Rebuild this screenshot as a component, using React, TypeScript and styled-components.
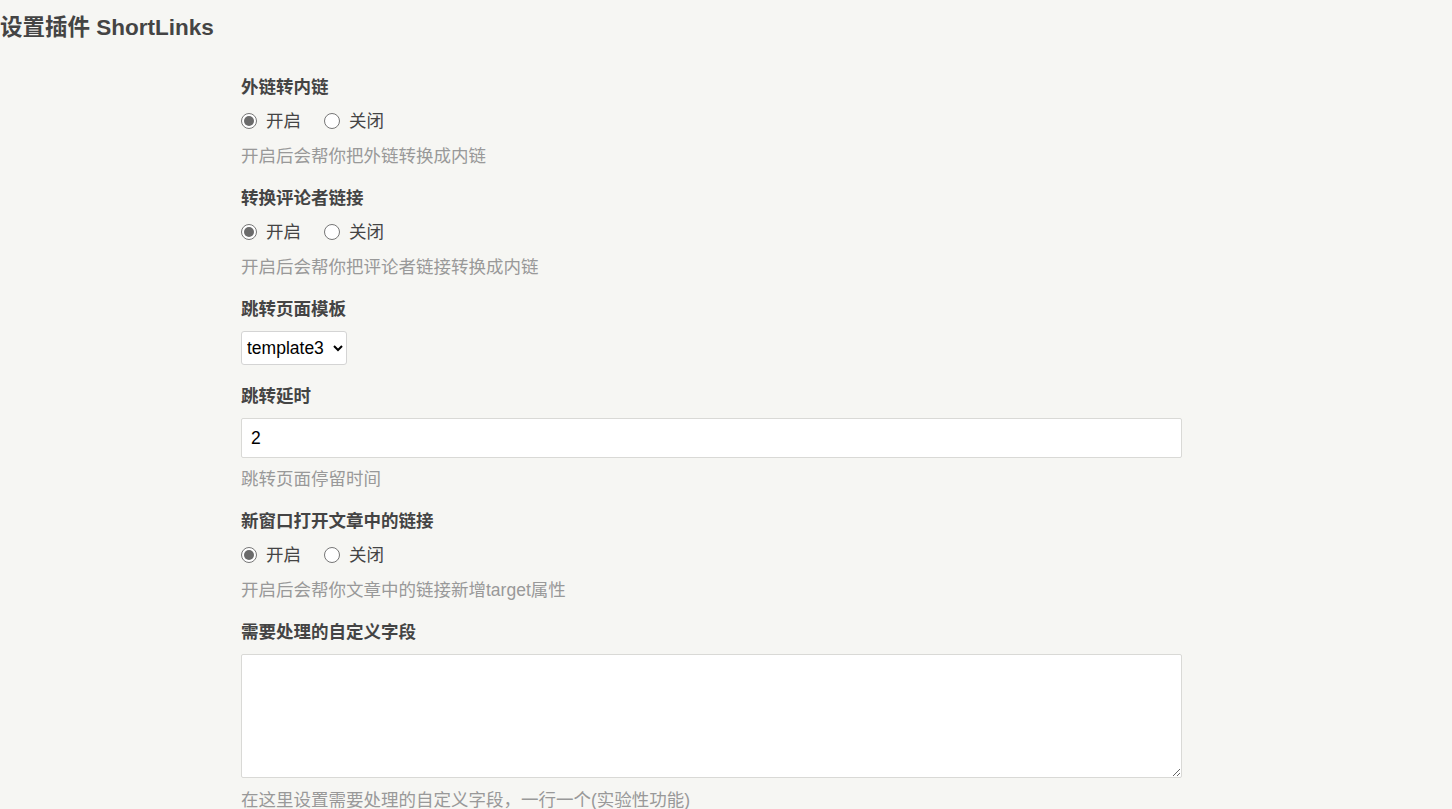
import React from "react";
import styled, { createGlobalStyle } from "styled-components";

const Global = createGlobalStyle`
  html, body { margin: 0; padding: 0; background: #f6f6f3; }
  body {
    font-family: "Liberation Sans", "Noto Sans CJK SC", sans-serif;
    font-size: 17.5px;
    color: #444;
  }
  * { box-sizing: border-box; }
`;

const Page = styled.div`
  display: flex;
  flex-direction: column;
  padding-top: 13px;
`;

const Title = styled.h2`
  margin: 0;
  font-size: 22.5px;
  line-height: 30px;
  font-weight: 700;
  color: #444;
`;

const Form = styled.ul`
  list-style: none;
  margin: 33px 0 0 241px;
  padding: 0;
  width: 941px;
  display: flex;
  flex-direction: column;
  gap: 20px;
`;

const Item = styled.li`
  display: flex;
  flex-direction: column;
  align-items: flex-start;
`;

const Label = styled.label`
  display: block;
  font-weight: 700;
  line-height: 22px;
  margin-bottom: 11px;
  color: #444;
`;

const RadioRow = styled.div`
  display: flex;
  align-items: center;
  height: 24px;
  gap: 23px;
`;

const RadioOption = styled.label`
  display: flex;
  align-items: center;
  gap: 9px;
  color: #444;
  line-height: 22px;
`;

const Radio = styled.input.attrs({ type: "radio" })`
  appearance: none;
  margin: 0;
  width: 16px;
  height: 16px;
  border-radius: 50%;
  border: 1px solid #767676;
  background: #fff;
  display: grid;
  place-content: center;
  &::before {
    content: "";
    width: 10px;
    height: 10px;
    border-radius: 50%;
    background: #6b6b6b;
    transform: scale(0);
  }
  &:checked::before { transform: scale(1); }
`;

const Desc = styled.p<{ $mt?: number }>`
  margin: ${(p) => p.$mt ?? 12}px 0 0;
  line-height: 22px;
  color: #999;
`;

const Select = styled.select`
  height: 34px;
  width: 106px;
  font-family: "Liberation Sans", sans-serif;
  font-size: 17.5px;
  color: #000;
  background: #fff;
  border: 1px solid #d4d4d4;
  border-radius: 3px;
  padding: 0 2px 0 1px;
`;

const TextInput = styled.input`
  width: 100%;
  height: 40px;
  font-family: "Liberation Sans", sans-serif;
  font-size: 17.5px;
  color: #000;
  background: #fff;
  border: 1px solid #d9d9d6;
  border-radius: 2px;
  padding: 0 9px;
  outline: none;
`;

const TextArea = styled.textarea`
  width: 100%;
  height: 124px;
  font-family: "Liberation Sans", sans-serif;
  font-size: 17.5px;
  background: #fff;
  border: 1px solid #d9d9d6;
  border-radius: 2px;
  padding: 6px 9px;
  margin: 0;
  display: block;
  outline: none;
`;

const RadioField: React.FC<{ name: string }> = ({ name }) => (
  <RadioRow>
    <RadioOption>
      <Radio name={name} defaultChecked />
      开启
    </RadioOption>
    <RadioOption>
      <Radio name={name} />
      关闭
    </RadioOption>
  </RadioRow>
);

export default function App() {
  return (
    <>
      <Global />
      <Page>
        <Title>设置插件 ShortLinks</Title>
        <Form>
          <Item>
            <Label>外链转内链</Label>
            <RadioField name="convert" />
            <Desc>开启后会帮你把外链转换成内链</Desc>
          </Item>
          <Item>
            <Label>转换评论者链接</Label>
            <RadioField name="convertComment" />
            <Desc>开启后会帮你把评论者链接转换成内链</Desc>
          </Item>
          <Item>
            <Label>跳转页面模板</Label>
            <Select defaultValue="template3">
              <option value="template1">template1</option>
              <option value="template2">template2</option>
              <option value="template3">template3</option>
            </Select>
          </Item>
          <Item>
            <Label>跳转延时</Label>
            <TextInput defaultValue="2" />
            <Desc $mt={10}>跳转页面停留时间</Desc>
          </Item>
          <Item>
            <Label>新窗口打开文章中的链接</Label>
            <RadioField name="target" />
            <Desc>开启后会帮你文章中的链接新增target属性</Desc>
          </Item>
          <Item>
            <Label>需要处理的自定义字段</Label>
            <TextArea />
            <Desc $mt={11}>在这里设置需要处理的自定义字段，一行一个(实验性功能)</Desc>
          </Item>
        </Form>
      </Page>
    </>
  );
}
